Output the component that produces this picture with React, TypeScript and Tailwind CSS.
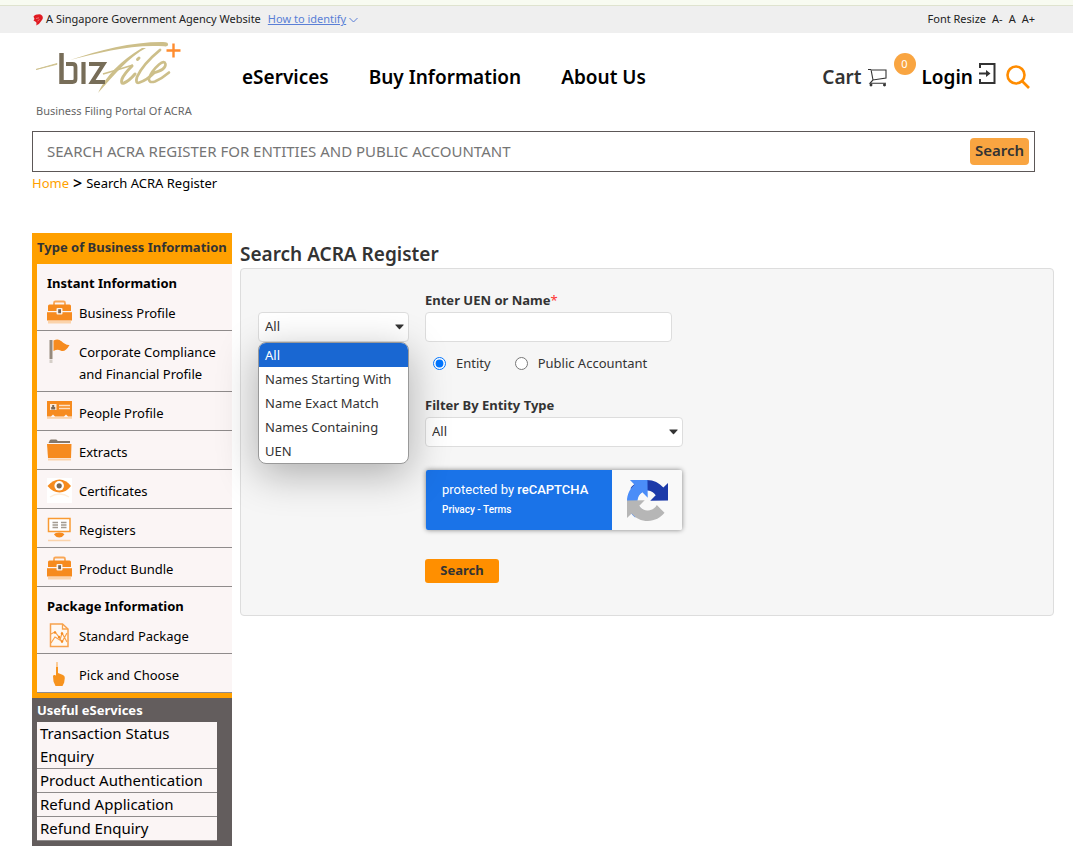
import { ReactNode, useState } from "react";

function BriefcaseIcon() {
  return (
    <svg width="26" height="25" viewBox="0 0 26 25" aria-hidden="true">
      <path d="M7 5V3a1.500 1.500 0 0 1 1.500-1.500h8A1.500 1.500 0 0 1 18 3v2" fill="none" stroke="#f9a757" strokeWidth="1.800" />
      <path d="M1 6a1.500 1.500 0 0 1 1.500-1.500h20A1.500 1.500 0 0 1 24 6v5H1z" fill="#f68b1f" />
      <path d="M0 12.200h25V20.500H0z" fill="#f68b1f" />
      <path d="M1 21h23v2.500H1z" fill="#fbd3ab" />
      <rect x="9.500" y="8" width="6" height="6.500" rx="1" fill="#fdf3ea" />
      <rect x="11.200" y="9.200" width="2.800" height="4" fill="#77685a" />
    </svg>
  );
}

function FlagIcon() {
  return (
    <svg width="26" height="25" viewBox="0 0 26 25" aria-hidden="true">
      <path d="M2.500 1h3v19h-3z" fill="#968a7d" />
      <path d="M2.500 20.500h3V24h-3z" fill="#d5cfc8" />
      <path d="M6.500 1.500c4-2 6-.8 8 .8 2.500 2 4.500 3.900 8 3.700-3 5.500-6 7-9 5.500-2.300-1.100-4.300-.8-7 .5z" fill="#f68b1f" />
    </svg>
  );
}

function CardIcon() {
  return (
    <svg width="26" height="25" viewBox="0 0 26 25" aria-hidden="true">
      <path d="M0 1h25v15.500h-4l-2-2-2 2H8l-2-2-2 2H0z" fill="#f68b1f" />
      <path d="M0 17h25v1.800H0z" fill="#fbd3ab" />
      <rect x="3" y="4" width="6.500" height="6" fill="#fde9d6" />
      <path d="M5.200 5h2v2h1v2.500h-4V7h1z" fill="#77685a" />
      <path d="M12 5.500h11M12 8.500h11" stroke="#fde0c4" strokeWidth="1.300" />
    </svg>
  );
}

function FolderIcon() {
  return (
    <svg width="26" height="25" viewBox="0 0 26 25" aria-hidden="true">
      <path d="M2.500 2Q2.500.5 4 .5h5Q10.500.5 10.500 2H23v2H1.500z" fill="#85786a" />
      <path d="M0 5h24.500L24 19H1z" fill="#f68b1f" />
      <path d="M1 19.500h23v2H1z" fill="#fbd3ab" />
    </svg>
  );
}

function EyeIcon() {
  return (
    <svg width="26" height="25" viewBox="0 0 26 25" aria-hidden="true">
      <rect width="25" height="25" fill="#fff" />
      <path d="M.5 8Q6 1.500 12.500 1.500T24 8q-5 6.500-11.500 6.500T.5 8z" fill="#f68b1f" />
      <circle cx="12.200" cy="7.800" r="4.800" fill="#fff" />
      <circle cx="12.200" cy="7.800" r="2.600" fill="#77685a" />
      <path d="M3 19q4.500-3 9.500-3t9.500 3" fill="none" stroke="#fdeedd" strokeWidth="1.500" />
    </svg>
  );
}

function MonitorIcon() {
  return (
    <svg width="26" height="25" viewBox="0 0 26 25" aria-hidden="true">
      <rect x="1.500" y="1.500" width="21.500" height="13" fill="#fff" stroke="#f99a33" strokeWidth="1.500" />
      <path d="M5.500 5.500h5.500M5.500 8h5.500M5.500 10.500h5.500M14 5.500h5.500M14 8h5.500M14 10.500h5.500" stroke="#a39a90" strokeWidth="1.400" />
      <path d="M7 17.500q1-2 5.200-2t5.200 2q-2 3-5.200 3t-5.200-3z" fill="#f68b1f" />
      <path d="M1 23.500h22.500" stroke="#fbd3ab" strokeWidth="1.500" />
    </svg>
  );
}

function ReportIcon() {
  return (
    <svg width="26" height="25" viewBox="0 0 26 25" aria-hidden="true">
      <path d="M3.500 1h12L21 6v17.500H3.500z" fill="#fff8f1" stroke="#f7a14b" strokeWidth="1.500" />
      <path d="M15.500 1v5H21" fill="none" stroke="#f7a14b" strokeWidth="1.300" />
      <path d="M4 11l4-2 4 5 3 5 5-9M4 20l4-6 5 3 2-7 5 9" fill="none" stroke="#f7a14b" strokeWidth="1.200" />
      <g fill="#f68b1f">
        <circle cx="8" cy="9.500" r="1.200" />
        <circle cx="12" cy="14" r="1.200" />
        <circle cx="15" cy="18.500" r="1.200" />
        <circle cx="15" cy="10.500" r="1.200" />
      </g>
    </svg>
  );
}

function PointerIcon() {
  return (
    <svg width="26" height="25" viewBox="0 0 26 25" aria-hidden="true">
      <path d="M9 2.500Q9 0 10 0t1 2.500V11l5 2q2 .8 1.800 3l-.6 4.500L15.500 24h-7L6.500 19.500 6 14q.4-1.200 1.600-1l1.400.4z" fill="#f7931e" />
      <path d="M9.200.5h1.600V5H9.200z" fill="#fcd9b3" />
    </svg>
  );
}

function Logo() {
  return (
    <svg width="148" height="56" viewBox="0 0 148 56" role="img" aria-label="bizFile plus">
      <path d="M0 28.500 21 22.500l0 .8z" fill="#cdbf8a" stroke="#cdbf8a" strokeWidth=".8" />
      <path d="M34 19C64 9 96 .8 127 1q6 .1 5 3.300-.6 1.500-4 1C96 3 64 11.500 34 19z" fill="#cdbf8a" />
      <path d="M110 7C94 15 78 34 62 52q12-26 44-45z" fill="#cdbf8a" />
      <path d="M67 33q14-4 30-9" fill="none" stroke="#cdbf8a" strokeWidth="1.800" />
      <g fill="none" stroke="#776d58">
        <path d="M25.500 12v31" strokeWidth="4.500" />
        <path d="M27 41h9.500q3 0 3-3V26q0-3-3-3H30" strokeWidth="3.800" />
        <path d="M47.500 21v22" strokeWidth="4.200" />
        <path d="M53 23h14.500L56 41h13" strokeWidth="4" />
      </g>
      <g fill="none" stroke="#cdbf8a" strokeLinecap="round">
        <path d="M96 25q-8 8-10 13-1.500 5 2 4 5-2 11-9" strokeWidth="3" />
        <path d="M101.500 18.500l1.500-1.500" strokeWidth="3" />
        <path d="M124 9q-17 14-23 27-2 7 2.500 5.500Q111 39 118 32" strokeWidth="2.800" />
        <path d="M117 32q13-3 12.500-9-1-4-6.500.5-8 7-10 14-.5 5 6 3 7-3 14-9" strokeWidth="2.600" />
      </g>
      <path d="M137.500 2.500v14M130.500 9.500h14" stroke="#ff8c2e" strokeWidth="2.400" />
    </svg>
  );
}

function LionIcon() {
  return (
    <svg width="10" height="12" viewBox="0 0 10 12" aria-hidden="true">
      <path d="M.5 2.500Q2 .3 4.500.6 7-.4 9 1.500q1.500 2 .3 4L7.500 8Q6 11 3 11.500 4 9.500 3 8L.5 6.500 1.500 5z" fill="#e01b22" />
      <path d="M3 4.500l3-.7M4.500 7l2-1.500" stroke="#f8b4b4" strokeWidth=".6" />
    </svg>
  );
}

function ChevronIcon() {
  return (
    <svg width="9" height="6" viewBox="0 0 9 6" fill="none" stroke="#5a7fd6" aria-hidden="true">
      <path d="M.5 1l4 4 4-4" />
    </svg>
  );
}

function CartIcon() {
  return (
    <svg width="20" height="19" viewBox="0 0 20 19" fill="none" stroke="#333" strokeWidth="1.100" aria-hidden="true">
      <path d="M0 1.500h3L5 12l13-2V2H4M5 12l-3 3.200h16" />
      <circle cx="3" cy="17" r=".9" fill="#333" />
      <circle cx="16.500" cy="17" r=".9" fill="#333" />
    </svg>
  );
}

function LoginIcon() {
  return (
    <svg width="17" height="22" viewBox="0 0 17 22" fill="none" stroke="#333" strokeWidth="2" aria-hidden="true">
      <path d="M1 5V1h14.500v19H1v-4" />
      <path d="M0 10.500h8" />
      <path d="M7 7v7l4.500-3.500z" fill="#333" stroke="none" />
    </svg>
  );
}

function SearchIcon() {
  return (
    <svg width="24" height="24" viewBox="0 0 24 24" fill="none" stroke="#ff8c00" strokeWidth="2.600" aria-hidden="true">
      <circle cx="10" cy="10" r="8.500" />
      <path d="M16 16l7 7" />
    </svg>
  );
}

const RECAPTCHA_ARROW =
  "M64 31.950V4.600l-7.300 7.300C50.700 4.600 41.600 0 31.450 0c-10.600 0-20 5-26 12.700l12 12.100c1.150-2.200 2.800-4 4.800-5.450 2.100-1.600 5.050-2.950 9.200-2.950.5 0 .9.060 1.150.17 5.150.4 9.600 3.230 12.200 7.340l-8.470 8.470z";

function RecaptchaLogo() {
  return (
    <svg width="41" height="41" viewBox="0 0 64 64" aria-hidden="true">
      <path d={RECAPTCHA_ARROW} fill="#1c3aa9" />
      <path d={RECAPTCHA_ARROW} fill="#4b8df8" transform="rotate(-90 32 32)" />
      <path d={RECAPTCHA_ARROW} fill="#b6b6b6" transform="rotate(180 32 32)" />
    </svg>
  );
}

function Caret() {
  return (
    <svg className="pointer-events-none absolute right-[5px] top-3" width="9" height="6" viewBox="0 0 9 6" aria-hidden="true">
      <path d="M.3 1Q0 .5.800.5h7.400q.8 0 .5.500L5 5Q4.500 5.500 4 5z" fill="#333" />
    </svg>
  );
}

interface MenuItem {
  label: string;
  icon: ReactNode;
}

const instantItems: MenuItem[] = [
  { label: "Business Profile", icon: <BriefcaseIcon /> },
  { label: "Corporate Compliance and Financial Profile", icon: <FlagIcon /> },
  { label: "People Profile", icon: <CardIcon /> },
  { label: "Extracts", icon: <FolderIcon /> },
  { label: "Certificates", icon: <EyeIcon /> },
  { label: "Registers", icon: <MonitorIcon /> },
  { label: "Product Bundle", icon: <BriefcaseIcon /> },
];

const packageItems: MenuItem[] = [
  { label: "Standard Package", icon: <ReportIcon /> },
  { label: "Pick and Choose", icon: <PointerIcon /> },
];

const usefulServices = [
  "Transaction Status Enquiry",
  "Product Authentication",
  "Refund Application",
  "Refund Enquiry",
];

const matchOptions = ["All", "Names Starting With", "Name Exact Match", "Names Containing", "UEN"];

function MenuGroup({ title, items }: { title: string; items: MenuItem[] }) {
  return (
    <>
      <h3 className="pl-2.5 pt-2.5 text-[13px] leading-[18px] font-bold">{title}</h3>
      <ul>
        {items.map((item) => (
          <li key={item.label} className="border-b border-[#8f8b8b]">
            <a href="#" className="flex items-start gap-2 pb-1.5 pl-2.5 pt-2">
              <span className="h-6 w-6 shrink-0">{item.icon}</span>
              <span className="pt-0.5 text-[13px] leading-[22px]">{item.label}</span>
            </a>
          </li>
        ))}
      </ul>
    </>
  );
}

function Sidebar() {
  return (
    <aside className="w-[200px] shrink-0">
      <div className="border-b-[5px] border-l-[5px] border-[#ffa000] bg-[#fbf5f5]">
        <h2 className="h-[31px] whitespace-nowrap bg-[#ffa000] text-[13px] leading-7 font-bold text-[#333]">
          Type of Business Information
        </h2>
        <MenuGroup title="Instant Information" items={instantItems} />
        <MenuGroup title="Package Information" items={packageItems} />
      </div>
      <div className="bg-[#635d5d] pb-[5px] pl-[5px] pr-[15px]">
        <h2 className="text-[13px] leading-6 font-bold text-white">Useful eServices</h2>
        <ul className="bg-[#fbf5f5]">
          {usefulServices.map((s) => (
            <li key={s} className="border-b border-[#8f8b8b] pl-[3px] text-[15px] leading-[23px]">
              <a href="#">{s}</a>
            </li>
          ))}
        </ul>
      </div>
    </aside>
  );
}

export default function App() {
  const [match, setMatch] = useState("All");
  const [kind, setKind] = useState("entity");

  return (
    <div className="bg-white pb-2.5 font-['Noto_Sans',sans-serif] text-black">
      <div className="h-1.5 border-b border-[#dfe3cf] bg-[#f8fbf1]" />
      <div className="flex h-[27px] items-center justify-between bg-[#efefef] pl-[33px] pr-[38px] text-[11px] text-[#222]">
        <div className="flex items-center gap-[3px]">
          <LionIcon />
          <span>A Singapore Government Agency Website</span>
          <a href="#" className="flex items-center gap-[3px] pl-1 text-[#5a7fd6]">
            <span className="underline">How to identify</span>
            <ChevronIcon />
          </a>
        </div>
        <div className="flex gap-1.5">
          <span>Font Resize</span>
          <button type="button">A-</button>
          <button type="button">A</button>
          <button type="button">A+</button>
        </div>
      </div>

      <header className="flex h-[98px] items-start pl-9 pr-[43px]">
        <div className="w-[206px] pt-2">
          <a href="#">
            <Logo />
          </a>
          <p className="mt-1.5 text-[11px] leading-4 text-[#666]">Business Filing Portal Of ACRA</p>
        </div>
        <nav className="flex flex-1 gap-10 pt-[30px] text-[19px] leading-7 font-semibold whitespace-nowrap">
          <a href="#">eServices</a>
          <a href="#">Buy Information</a>
          <a href="#">About Us</a>
        </nav>
        <div className="flex items-center gap-1.5 pt-[30px] text-[19px] leading-7 font-semibold">
          <a href="#" className="relative mr-7 flex items-center gap-1.5 text-[#333]">
            Cart
            <CartIcon />
            <span className="absolute -right-7 -top-2.5 flex h-[22px] w-[22px] items-center justify-center rounded-full bg-[#f9a541] text-[11px] font-normal text-white">
              0
            </span>
          </a>
          <a href="#" className="flex items-center gap-1.5">
            Login
            <span className="pb-1.5">
              <LoginIcon />
            </span>
          </a>
          <button type="button" aria-label="Search" className="ml-1">
            <SearchIcon />
          </button>
        </div>
      </header>

      <form
        className="ml-8 mr-[38px] flex h-[41px] items-center border border-[#5c5757] pl-3.5 pr-[5px]"
        onSubmit={(e) => e.preventDefault()}
      >
        <input
          type="text"
          aria-label="Search register"
          placeholder="SEARCH ACRA REGISTER FOR ENTITIES AND PUBLIC ACCOUNTANT"
          className="h-full min-w-0 flex-1 pb-0.5 text-[15px] outline-none placeholder:text-[#757575]"
        />
        <button type="submit" className="h-[27px] w-[59px] rounded bg-[#f9a541] pb-0.5 text-[15px] leading-[25px] font-semibold text-[#333]">
          Search
        </button>
      </form>

      <div className="flex gap-1 pl-8 text-[13px] leading-[23px]">
        <a href="#" className="text-[#ffa000]">
          Home
        </a>
        <span className="text-base leading-[23px] font-semibold">&gt;</span>
        <span>Search ACRA Register</span>
      </div>

      <div className="flex gap-2 pl-8 pr-[19px] pt-[38px]">
        <Sidebar />
        <main className="min-w-0 flex-1">
          <h1 className="pt-2 text-[19px] leading-[27px] font-semibold text-[#333]">Search ACRA Register</h1>
          <form
            className="flex gap-4 rounded border border-[#ddd] bg-[#f6f6f6] pb-8 pl-[17px] pt-5 text-[13px] text-[#333]"
            onSubmit={(e) => e.preventDefault()}
          >
            <div className="relative w-[151px] shrink-0 pt-[23px]">
              <div className="relative">
                <select
                  aria-label="Match type"
                  value={match}
                  onChange={(e) => setMatch(e.target.value)}
                  className="h-[30px] w-full appearance-none rounded border border-[#ddd] bg-white pl-1.5"
                >
                  {matchOptions.map((o) => (
                    <option key={o}>{o}</option>
                  ))}
                </select>
                <Caret />
              </div>
              <ul
                role="listbox"
                aria-label="Match type options"
                className="absolute left-0 top-[53px] z-10 w-full overflow-hidden rounded-lg border border-[#999] bg-white shadow-[0_10px_40px_rgba(0,0,0,0.3)]"
              >
                {matchOptions.map((o) => (
                  <li
                    key={o}
                    role="option"
                    aria-selected={o === match}
                    onClick={() => setMatch(o)}
                    className="pl-1.5 leading-6 aria-selected:bg-[#1967d2] aria-selected:text-white"
                  >
                    {o}
                  </li>
                ))}
              </ul>
            </div>

            <div>
              <label htmlFor="uen" className="block leading-[23px] font-bold">
                Enter UEN or Name<span className="font-normal text-[#f33]">*</span>
              </label>
              <input id="uen" type="text" className="block h-[30px] w-[247px] rounded border border-[#ddd] bg-white px-1.5" />
              <div className="flex gap-6 pl-2 pt-2.5 leading-[22px]">
                <label className="flex items-center gap-2.5">
                  <input
                    type="radio"
                    name="kind"
                    checked={kind === "entity"}
                    onChange={() => setKind("entity")}
                    className="h-[13px] w-[13px]"
                  />
                  Entity
                </label>
                <label className="flex items-center gap-2.5">
                  <input
                    type="radio"
                    name="kind"
                    checked={kind === "accountant"}
                    onChange={() => setKind("accountant")}
                    className="h-[13px] w-[13px]"
                  />
                  Public Accountant
                </label>
              </div>
              <label htmlFor="entity-type" className="mt-5 block leading-[23px] font-bold">
                Filter By Entity Type
              </label>
              <div className="relative w-[258px]">
                <select id="entity-type" className="h-[30px] w-full appearance-none rounded border border-[#ddd] bg-white pl-1.5">
                  <option>All</option>
                </select>
                <Caret />
              </div>

              <div className="ml-px mt-[23px] flex h-[60px] w-64 overflow-hidden rounded-xs font-[Roboto,sans-serif] shadow-[0_0_5px_gray]">
                <div className="w-[186px] bg-[#1a73e8] pl-4 pt-2.5 text-white">
                  <p className="text-[13px] leading-5">
                    protected by <strong className="font-medium">reCAPTCHA</strong>
                  </p>
                  <p className="text-[10px] leading-5 font-medium">
                    <a href="#">Privacy</a> - <a href="#">Terms</a>
                  </p>
                </div>
                <div className="flex flex-1 items-center justify-center bg-[#f9f9f9]">
                  <RecaptchaLogo />
                </div>
              </div>

              <button type="submit" className="mt-[29px] h-6 w-[74px] rounded-[3px] bg-[#ff8f00] text-[13px] font-bold text-[#333]">
                Search
              </button>
            </div>
          </form>
        </main>
      </div>
    </div>
  );
}
